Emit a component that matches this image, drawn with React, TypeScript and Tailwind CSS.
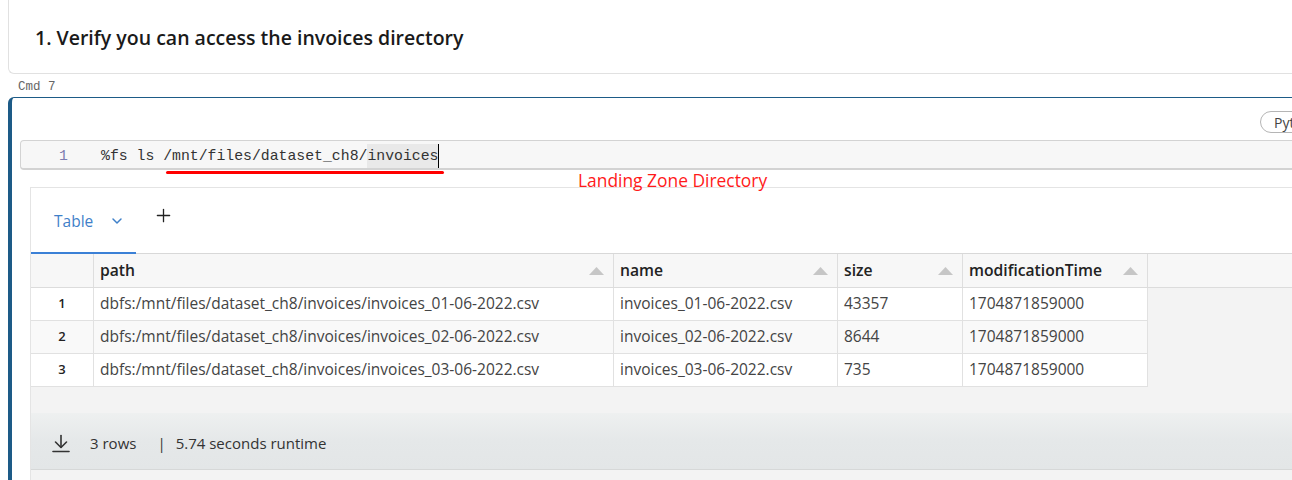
import { ChevronDown, Plus } from 'lucide-react';

const columns = [
  { key: 'path', label: 'path', width: 'w-[520px]' },
  { key: 'name', label: 'name', width: 'w-[224px]' },
  { key: 'size', label: 'size', width: 'w-[125px]' },
  { key: 'modificationTime', label: 'modificationTime', width: 'w-[185px]' },
];

const rows = [
  { path: 'dbfs:/mnt/files/dataset_ch8/invoices/invoices_01-06-2022.csv', name: 'invoices_01-06-2022.csv', size: '43357', modificationTime: '1704871859000' },
  { path: 'dbfs:/mnt/files/dataset_ch8/invoices/invoices_02-06-2022.csv', name: 'invoices_02-06-2022.csv', size: '8644', modificationTime: '1704871859000' },
  { path: 'dbfs:/mnt/files/dataset_ch8/invoices/invoices_03-06-2022.csv', name: 'invoices_03-06-2022.csv', size: '735', modificationTime: '1704871859000' },
];

function SortArrow() {
  return (
    <svg width="15" height="8" viewBox="0 0 15 8" className="shrink-0">
      <path d="M7.5 0 L15 8 L0 8 Z" fill="#c6c6c6" />
    </svg>
  );
}

function DownloadIcon() {
  return (
    <svg width="18" height="19" viewBox="0 0 18 19" fill="none" stroke="#333" strokeWidth="1.6" strokeLinecap="round" strokeLinejoin="round">
      <path d="M9 1.5 V13" />
      <path d="M3.5 8 L9 13.5 L14.5 8" />
      <path d="M1 17.5 H17" />
    </svg>
  );
}

export default function App() {
  return (
    <div className="w-[1292px] h-[480px] overflow-hidden bg-white font-['Open_Sans',sans-serif] text-[#333]">
      {/* markdown cell */}
      <div className="ml-2 w-[1310px] h-[74px] border-l border-b border-[#e1e1e1] rounded-bl-md flex items-center pl-[26px]">
        <h2 className="text-[19.5px] font-semibold text-[#1a1a1a] pt-[3px]">1. Verify you can access the invoices directory</h2>
      </div>

      <div className="h-[23px] pl-[18px] pt-[6px] font-['Liberation_Mono',monospace] text-[12.5px] leading-[15px] text-[#666]">Cmd 7</div>

      {/* code cell */}
      <div className="ml-2 w-[1300px] h-[400px] border-l-4 border-t border-[#1d5b87] rounded-tl-md relative">
        <div className="flex justify-end pt-[13px]">
          <div className="w-[56px] h-[22px] -mr-2 rounded-full border border-[#b5b5b5] flex items-center pl-[13px] text-[14px] text-[#444] whitespace-nowrap">Pyt</div>
        </div>

        <div className="relative ml-2 mt-[7px] h-[30px] pt-[3px] bg-[#f7f7f7] border border-b-2 border-[#d3d3d3] rounded-sm flex items-center">
          <span className="w-[80px] pl-[38px] font-['Liberation_Mono',monospace] text-[14.8px] text-[#7c7cb0]">1</span>
          <span className="font-['Liberation_Mono',monospace] text-[14.8px] text-[#333] whitespace-pre">
            %fs ls /mnt/files/dataset_ch8/<span className="bg-[#e9e9e9] py-[4px]">invoices</span>
          </span>
          <span className="w-px h-[24px] bg-black" />
          <span className="absolute left-[145px] top-[30px] w-[278px] h-[3px] rounded-full bg-[#ff0000]" />
        </div>

        <span className="absolute left-[566px] top-[69px] text-[17.4px] text-[#ff1a1a]">Landing Zone Directory</span>

        {/* results */}
        <div className="ml-[18px] mt-[17px] h-[300px] border border-[#e4e4e4] bg-[#f3f3f3]">
          <div className="h-[66px] bg-white border-b border-[#d8d8d8] flex items-end">
            <div className="w-[105px] h-[43px] -mb-px border-b-2 border-[#3b80d6] flex items-start pl-[23px] gap-[16px]">
              <span className="text-[15.5px] leading-[20px] text-[#3f80c9]">Table</span>
              <ChevronDown size={16} strokeWidth={2.2} className="mt-[2px] text-[#3f80c9]" />
            </div>
            <div className="h-[43px] flex items-start pl-[17px]">
              <Plus size={21} strokeWidth={1.5} className="mt-[-5px] text-[#222]" />
            </div>
          </div>

          <div className="flex h-[34px] bg-[#f7f7f7] border-b border-[#dcdcdc]">
            <div className="w-[63px] border-r border-[#dedede]" />
            {columns.map((c) => (
              <div key={c.key} className={`${c.width} shrink-0 border-r border-[#dedede] flex items-center justify-between pl-[6px] pr-[9px]`}>
                <span className="text-[15.7px] font-semibold text-[#222]">{c.label}</span>
                <SortArrow />
              </div>
            ))}
          </div>

          {rows.map((r, i) => (
            <div key={r.path} className="flex h-[33px]">
              <div className={`w-[1117px] flex border-b border-[#e1e1e1] ${i === 1 ? 'bg-[#f9f9f9]' : 'bg-white'}`}>
                <div className="w-[63px] border-r border-[#e1e1e1] flex items-center justify-center text-[13px] font-semibold text-[#222]">{i + 1}</div>
                {columns.map((c) => (
                  <div key={c.key} className={`${c.width} shrink-0 border-r border-[#e1e1e1] flex items-center pl-[6px] text-[15.5px] text-[#444] whitespace-nowrap`}>
                    {r[c.key as keyof typeof r]}
                  </div>
                ))}
              </div>
            </div>
          ))}

          <div className="h-[26px]" />

          <div className="h-[57px] pt-[4px] bg-gradient-to-b from-[#eef0f0] via-[#e5e8e9] to-[#e3e6e7] border-b border-[#d6d8d8] flex items-center pl-[21px] text-[15px] text-[#333]">
            <DownloadIcon />
            <span className="ml-[20px]">3 rows</span>
            <span className="ml-[21px]">|</span>
            <span className="ml-[10px]">5.74 seconds runtime</span>
          </div>
        </div>
      </div>
    </div>
  );
}
